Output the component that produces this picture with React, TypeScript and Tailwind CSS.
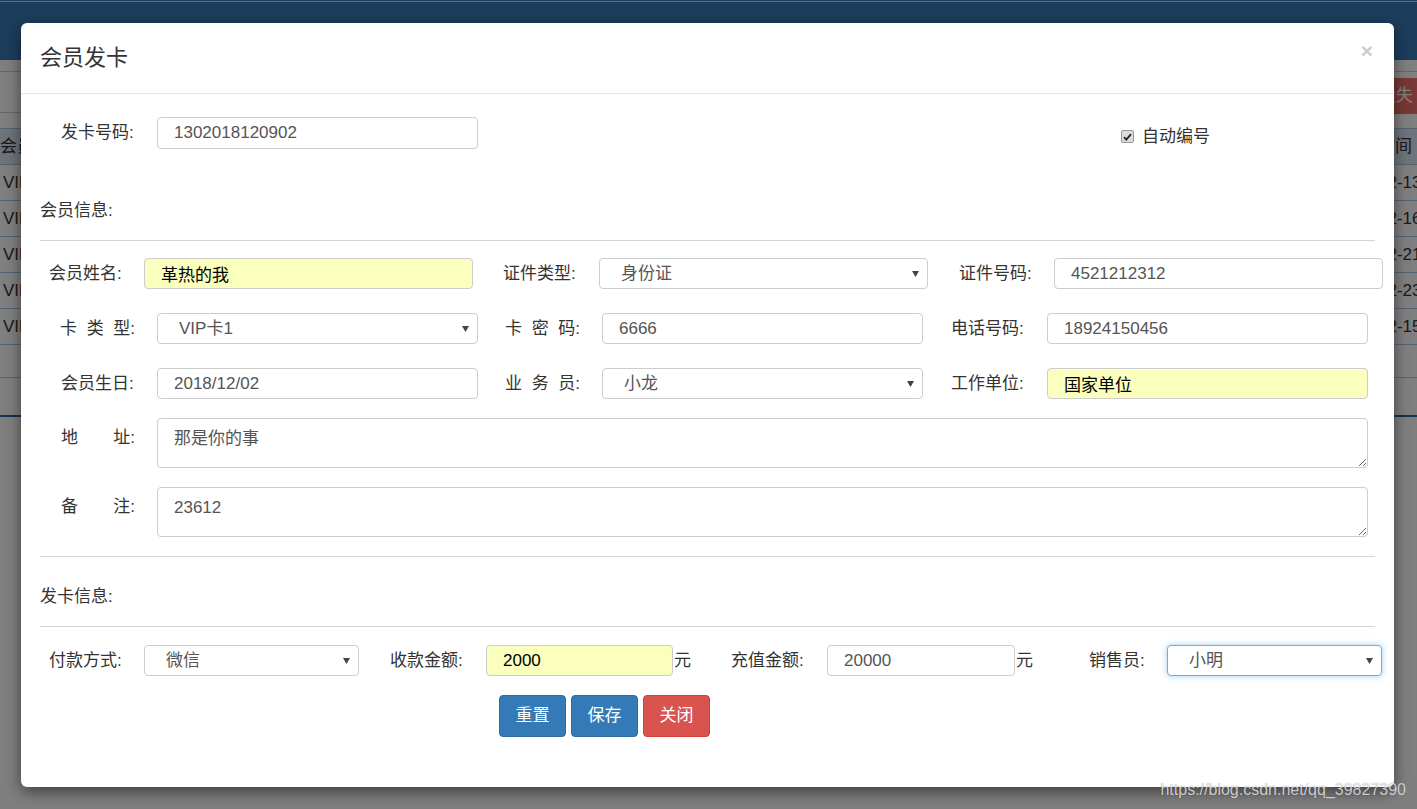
import { ReactNode } from 'react';

const bgRows = [
  { left: 'VIP卡1', right: '12-13' },
  { left: 'VIP卡1', right: '12-16' },
  { left: 'VIP卡2', right: '12-21' },
  { left: 'VIP卡1', right: '12-23' },
  { left: 'VIP卡3', right: '12-15' },
];

function Label({ text, className = '' }: { text: string; className?: string }) {
  const parts = text.split(' ');
  return (
    <div className={`flex shrink-0 justify-between text-[#333] ${className}`}>
      {parts.map((p, i) => (
        <span key={i}>{p}</span>
      ))}
    </div>
  );
}

function TextInput({ value, className = '', filled = false }: { value: string; className?: string; filled?: boolean }) {
  return (
    <input
      readOnly
      defaultValue={value}
      className={`shrink-0 rounded-[4px] border border-[#ccc] pl-4 outline-none ${
        filled ? 'bg-[#faffbd] text-black' : 'bg-white text-[#555]'
      } ${className}`}
    />
  );
}

function Select({ value, className = '', focused = false }: { value: string; className?: string; focused?: boolean }) {
  return (
    <div className={`relative shrink-0 ${className}`}>
      <select
        defaultValue={value}
        className={`h-[31px] w-full appearance-none rounded-[4px] border bg-white pl-[21px] text-[#555] outline-none ${
          focused ? 'border-[#66afe9] shadow-[0_0_6px_rgba(102,175,233,0.6)]' : 'border-[#ccc]'
        }`}
      >
        <option>{value}</option>
      </select>
      <svg
        className="pointer-events-none absolute right-[9px] top-[13px]"
        width="7"
        height="6"
        viewBox="0 0 7 6"
      >
        <path d="M0 0h7L3.5 6z" fill="#444" />
      </svg>
    </div>
  );
}

function Area({ label, value }: { label: string; value: string }) {
  return (
    <div className="mt-[19px] flex items-start">
      <Label text={label} className="ml-[21px] mt-[8px] w-[74px]" />
      <textarea
        readOnly
        defaultValue={value}
        className="ml-[22px] h-[50px] w-[1211px] shrink-0 rounded-[4px] border border-[#ccc] bg-white px-4 pt-[8px] leading-[24px] text-[#555] outline-none"
      />
    </div>
  );
}

function Button({ children, danger = false }: { children: ReactNode; danger?: boolean }) {
  return (
    <button
      className={`h-[42px] w-[67px] rounded-[4px] border text-white ${
        danger ? 'border-[#d43f3a] bg-[#d9534f]' : 'border-[#2e6da4] bg-[#337ab7]'
      }`}
    >
      {children}
    </button>
  );
}

export default function App() {
  return (
    <div className="relative h-[809px] w-[1417px] overflow-hidden bg-white font-['Liberation_Sans','Noto_Sans_CJK_SC',sans-serif] text-[17px] leading-[24px]">
      {/* page behind the dialog */}
      <div className="h-[60px] bg-[#3a7ab8]">
        <div className="h-px" />
        <div className="h-px bg-[#c8dcef]" />
      </div>
      <div className="h-[12px] border-b border-[#ccc]" />
      <div className="flex h-[41px] items-start justify-end border-b border-[#ccc]">
        <div className="mt-[6px] flex h-[36px] w-[50px] shrink-0 items-center whitespace-nowrap rounded-l-[4px] bg-[#f0706a] pl-[12px] text-white">
          挂失
        </div>
      </div>
      <div className="h-[15px]" />
      <div className="flex h-[37px] items-center justify-between border-y border-[#a9c6e6] bg-[#dce8f5] text-[#333]">
        <span className="whitespace-nowrap">会员名称</span>
        <span className="w-[39px] shrink-0 whitespace-nowrap">时间</span>
      </div>
      {bgRows.map((r, i) => (
        <div key={i} className="flex h-[36px] items-center justify-between border-b border-[#a9c6e6] text-[#333]">
          <span className="whitespace-nowrap pl-[3px]">{r.left}</span>
          <span className="w-[39px] shrink-0 whitespace-nowrap">{r.right}</span>
        </div>
      ))}
      <div className="h-[33px] border-b border-[#a9c6e6]" />
      <div className="h-[39px] border-b-2 border-[#2d6aa5]" />

      <div className="absolute inset-0 bg-black/50" />

      {/* dialog */}
      <div className="absolute left-[21px] top-[23px] w-[1373px] rounded-[6px] bg-white shadow-[0_5px_15px_rgba(0,0,0,0.5)]">
        <div className="flex h-[71px] items-center justify-between border-b border-[#e5e5e5] pl-[19px] pr-[21px]">
          <h4 className="text-[22px] leading-[30px] text-[#333]">会员发卡</h4>
          <button className="mt-[17px] self-start text-[21px] font-bold leading-none text-black opacity-20">×</button>
        </div>

        <div className="px-[19px] pb-[50px] pt-[23px]">
          <div className="flex items-center">
            <Label text="发卡号码:" className="ml-[21px] w-[74px]" />
            <TextInput value="1302018120902" className="ml-[22px] h-[32px] w-[321px]" />
            <div className="ml-[643px] mt-[7px] flex shrink-0 items-center">
              <span className="flex h-[13px] w-[13px] items-center justify-center rounded-[2px] border border-[#9a9a9a] bg-[#dcdcdc]">
                <svg width="9" height="8" viewBox="0 0 9 8">
                  <path d="M1 4.2l2.3 2.4L8 1.2" stroke="#222" strokeWidth="1.8" fill="none" />
                </svg>
              </span>
              <span className="ml-[8px] whitespace-nowrap text-[#333]">自动编号</span>
            </div>
          </div>

          <div className="mt-[50px] text-[#333]">会员信息:</div>
          <div className="mt-[17px] border-t border-[#d4d4d4]" />

          <div className="mt-[17px] flex items-center">
            <Label text="会员姓名:" className="ml-[9px] w-[75px]" />
            <TextInput value="革热的我" filled className="ml-[20px] h-[31px] w-[329px]" />
            <Label text="证件类型:" className="ml-[30px] w-[75px]" />
            <Select value="身份证" className="ml-[21px] w-[329px]" />
            <Label text="证件号码:" className="ml-[31px] w-[75px]" />
            <TextInput value="4521212312" className="ml-[20px] h-[31px] w-[329px]" />
          </div>

          <div className="mt-[24px] flex items-center">
            <Label text="卡 类 型:" className="ml-[20px] w-[75px]" />
            <Select value="VIP卡1" className="ml-[22px] w-[321px]" />
            <Label text="卡 密 码:" className="ml-[27px] w-[75px]" />
            <TextInput value="6666" className="ml-[22px] h-[31px] w-[321px]" />
            <Label text="电话号码:" className="ml-[28px] w-[75px]" />
            <TextInput value="18924150456" className="ml-[21px] h-[31px] w-[321px]" />
          </div>

          <div className="mt-[24px] flex items-center">
            <Label text="会员生日:" className="ml-[21px] w-[74px]" />
            <TextInput value="2018/12/02" className="ml-[22px] h-[31px] w-[321px]" />
            <Label text="业 务 员:" className="ml-[27px] w-[75px]" />
            <Select value="小龙" className="ml-[22px] w-[321px]" />
            <Label text="工作单位:" className="ml-[28px] w-[75px]" />
            <TextInput value="国家单位" filled className="ml-[21px] h-[31px] w-[321px]" />
          </div>

          <Area label="地 址:" value="那是你的事" />
          <Area label="备 注:" value="23612" />

          <div className="mt-[19px] border-t border-[#d4d4d4]" />
          <div className="mt-[28px] text-[#333]">发卡信息:</div>
          <div className="mt-[17px] border-t border-[#d4d4d4]" />

          <div className="mt-[18px] flex items-center">
            <Label text="付款方式:" className="ml-[9px] w-[75px]" />
            <Select value="微信" className="ml-[20px] w-[215px]" />
            <Label text="收款金额:" className="ml-[31px] w-[75px]" />
            <TextInput value="2000" filled className="ml-[21px] h-[31px] w-[187px]" />
            <span className="ml-[1px] shrink-0 text-[#333]">元</span>
            <Label text="充值金额:" className="ml-[40px] w-[75px]" />
            <TextInput value="20000" className="ml-[21px] h-[31px] w-[188px]" />
            <span className="ml-[1px] shrink-0 text-[#333]">元</span>
            <Label text="销售员:" className="ml-[56px] w-[57px]" />
            <Select value="小明" focused className="ml-[21px] w-[215px]" />
          </div>

          <div className="ml-[459px] mt-[19px] flex gap-[5px]">
            <Button>重置</Button>
            <Button>保存</Button>
            <Button danger>关闭</Button>
          </div>
        </div>
      </div>

      <div className="absolute bottom-[7px] right-[11px] whitespace-nowrap text-[16px] text-white/75 [text-shadow:0_0_1px_rgba(0,0,0,0.45)]">
        https://blog.csdn.net/qq_39827390
      </div>
    </div>
  );
}
